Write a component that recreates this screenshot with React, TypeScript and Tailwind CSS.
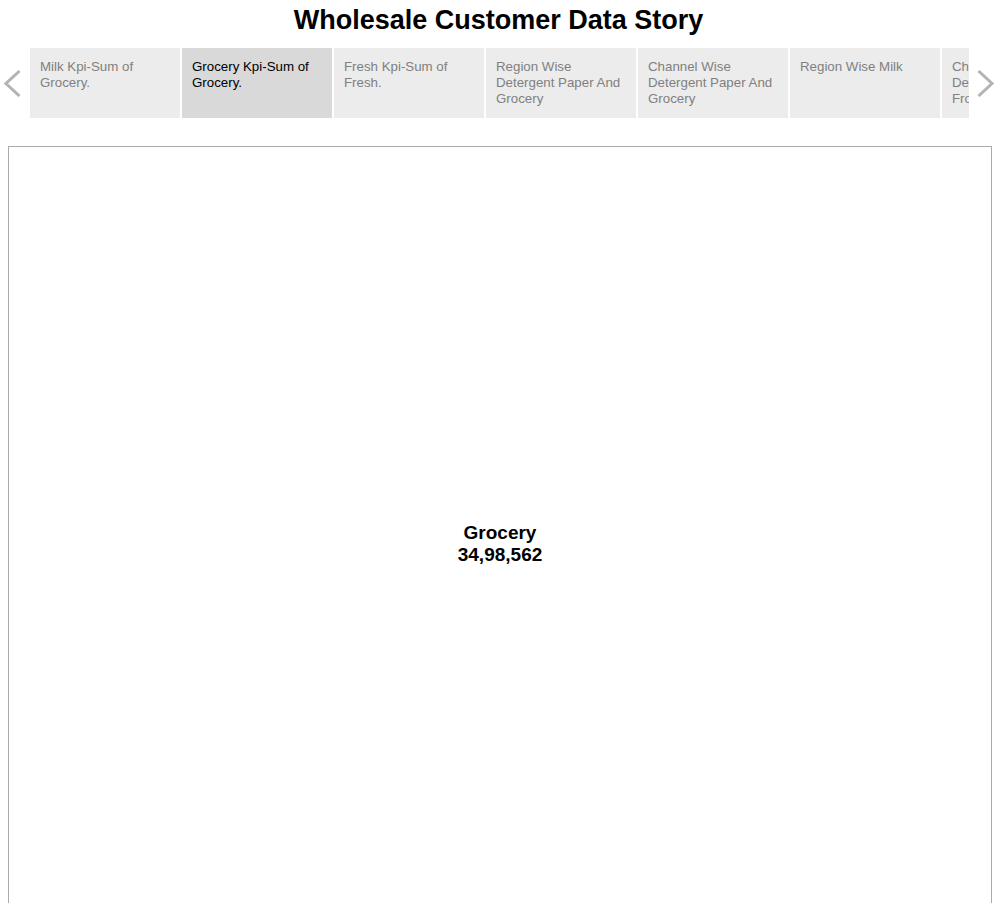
const tabs = [
  "Milk Kpi-Sum of Grocery.",
  "Grocery Kpi-Sum of Grocery.",
  "Fresh Kpi-Sum of Fresh.",
  "Region Wise Detergent Paper And Grocery",
  "Channel Wise Detergent Paper And Grocery",
  "Region Wise Milk",
  "Channel Wise Detergent Paper And Frozen",
];

function Chevron({ dir }: { dir: "left" | "right" }) {
  return (
    <svg width="17" height="27" viewBox="0 0 17 27" fill="none">
      <path
        d={dir === "left" ? "M15.5 1 L2 13.5 L15.5 26" : "M1.5 1 L15 13.5 L1.5 26"}
        stroke="#b4b4b4"
        strokeWidth="3"
      />
    </svg>
  );
}

export default function App() {
  return (
    <div className="h-[903px] overflow-hidden bg-white font-['Liberation_Sans',Arial,sans-serif]">
      <h1 className="pt-[4px] text-center text-[27px] leading-[32px] font-bold text-black">
        Wholesale Customer Data Story
      </h1>

      {/* story tabs */}
      <div className="mt-[12px] flex items-center">
        <div className="flex w-[30px] pl-[4px]">
          <Chevron dir="left" />
        </div>
        <div className="flex w-[939px] gap-[2px] overflow-hidden">
          {tabs.map((t, i) => (
            <div
              key={t}
              className={
                "h-[70px] w-[150px] flex-shrink-0 px-[10px] pt-[11px] text-[13.3px] leading-[16px] " +
                (i === 1 ? "bg-[#d9d9d9] text-black" : "bg-[#ececec] text-[#808080]")
              }
            >
              {t}
            </div>
          ))}
        </div>
        <div className="flex w-[28px] pl-[8px]">
          <Chevron dir="right" />
        </div>
      </div>

      {/* chart area */}
      <div className="mt-[28px] ml-2 flex h-[796px] w-[984px] items-center justify-center border border-[#aaaaaa]">
        <div className="text-center text-[19px] leading-[22px] font-bold text-black">
          <div>Grocery</div>
          <div>34,98,562</div>
        </div>
      </div>
    </div>
  );
}
